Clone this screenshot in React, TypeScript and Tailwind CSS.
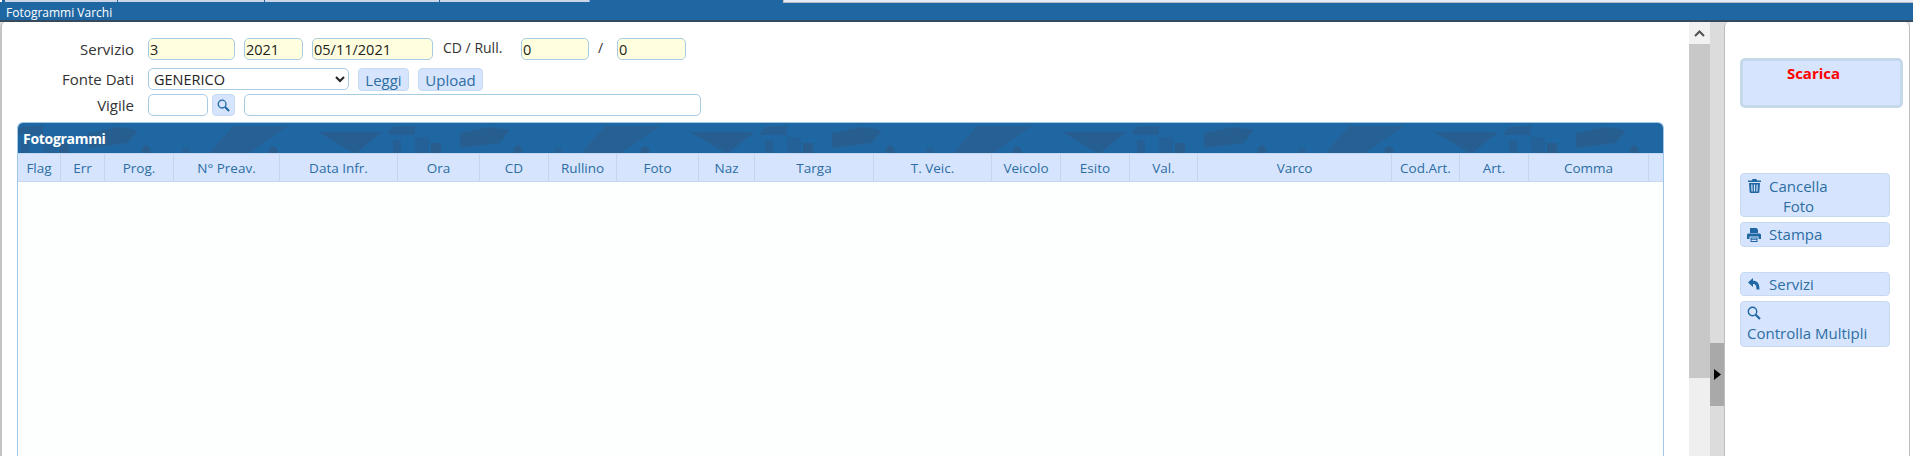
const columns: [string, number][] = [
  ['Flag', 43], ['Err', 44], ['Prog.', 69], ['N° Preav.', 106], ['Data Infr.', 118],
  ['Ora', 82], ['CD', 69], ['Rullino', 68], ['Foto', 82], ['Naz', 56],
  ['Targa', 119], ['T. Veic.', 118], ['Veicolo', 69], ['Esito', 69], ['Val.', 68],
  ['Varco', 194], ['Cod.Art.', 68], ['Art.', 69], ['Comma', 120], ['', 14],
];

const inputCls = 'h-[22px] rounded-[5px] border border-[#a8cbe4] px-px text-[14.5px] leading-[20px] text-[#222] outline-none';
const yellowCls = inputCls + ' bg-[#ffffdf]';
const btnCls = 'rounded-[4px] border border-[#c5daf0] bg-[#d6e5fd] text-[15px] text-[#2d6da3]';

function Label({ children }: { children: string }) {
  return <div className="mr-[14px] w-[117px] shrink-0 text-right text-[15px] leading-[22px] text-[#333]">{children}</div>;
}

function Lens({ size }: { size: number }) {
  return (
    <svg width={size} height={size} viewBox="0 0 14 14" fill="none" stroke="#1f67a3">
      <circle cx="5.5" cy="5.5" r="4.2" strokeWidth="1.4" />
      <path d="M8.7 8.7 L13 13" strokeWidth="2.2" />
    </svg>
  );
}

function TrashIcon() {
  return (
    <svg width="13" height="14" viewBox="0 0 13 14" fill="#1f67a3">
      <path d="M4.5 0h4l.6 1.5H13V3H0V1.5h3.9z" />
      <path d="M1 4h11l-.7 9.2-.8.8h-8l-.8-.8zM3.2 5.5l.3 7h1.2l-.3-7zm2.7 0v7h1.2v-7zm2.7 0-.3 7h1.2l.3-7z" fillRule="evenodd" />
    </svg>
  );
}

function PrintIcon() {
  return (
    <svg width="14" height="14" viewBox="0 0 14 14" fill="#1f67a3">
      <path d="M3 0h6.5L11 1.5V5H3z" />
      <path d="M1 5.5h12l1 1v4.5h-2.5V8.5h-9V11H0V6.5z" />
      <path d="M3.5 9.5h7V14h-7zM4.5 10.5v.8h5v-.8zm0 1.6v.8h5v-.8z" fillRule="evenodd" />
    </svg>
  );
}

function BackIcon() {
  return (
    <svg width="12" height="12" viewBox="0 0 12 12" fill="#1f67a3">
      <path d="M0 4.5 L5 0 V2.8 C9 2.8 11.5 5 11.5 11.5 H8.5 C8.5 7.5 7.5 6 5 6 V9 Z" />
    </svg>
  );
}

function HeaderPattern() {
  return (
    <svg className="absolute inset-0 h-full w-full" aria-hidden="true">
      <defs>
        <pattern id="skyline" width="372" height="31" patternUnits="userSpaceOnUse" x="25" y="0">
          <rect x="0" y="14" width="14" height="17" fill="#285d8e" opacity="0.55" />
          <rect x="16" y="20" width="10" height="11" fill="#285d8e" />
          <path d="M45 10 L75 4 L95 7 L85 20 L45 25 Z" fill="#285d8e" opacity="0.9" />
          <circle cx="103" cy="27" r="4.5" fill="#285d8e" />
          <circle cx="143" cy="28" r="4" fill="#285d8e" opacity="0.6" />
          <path d="M165 31 L190 3 L245 3 L205 31 Z" fill="#285d8e" opacity="0.75" />
          <circle cx="230" cy="28" r="4.5" fill="#285d8e" />
          <path d="M275 9 L340 9 L312 31 Z" fill="#285d8e" opacity="0.85" />
          <path d="M345 12 Q345 3 358 3 L372 3 L372 12 Z" fill="#285d8e" opacity="0.8" />
          <rect x="350" y="17" width="8" height="14" fill="#285d8e" opacity="0.8" />
        </pattern>
      </defs>
      <rect width="100%" height="100%" fill="url(#skyline)" />
    </svg>
  );
}

export default function App() {
  return (
    <div className="flex h-[456px] w-[1913px] flex-col overflow-hidden bg-white font-['Open_Sans',sans-serif]">
      {/* Tab strip */}
      <div className="flex h-[3px] shrink-0 bg-[#1f67a3]">
        <div className="h-[2px] w-[2px] bg-white" />
        <div className="ml-[3px] h-[2px] w-[113px] border-r border-[#1f67a3] bg-[#ccd6e8]" />
        <div className="h-[2px] w-[147px] border-r border-[#1f67a3] bg-[#ccd6e8]" />
        <div className="h-[2px] w-[175px] border-r border-[#1f67a3] bg-[#ccd6e8]" />
        <div className="h-[2px] w-[150px] border-r border-[#7fb0dc] bg-[#ccd6e8]" />
        <div className="ml-[193px] h-[3px] flex-1 border-b border-l border-[#b5bcc4] bg-[#e6ecf5]" />
      </div>

      {/* Title */}
      <div className="h-[19px] shrink-0 border-b-2 border-[#37495c] bg-[#1f67a3] pl-[6px] pt-[2px] text-[12px] leading-[15px] text-white">
        Fotogrammi Varchi
      </div>

      <div className="flex min-h-0 flex-1 bg-[#dcdcdc]">
        {/* Main area */}
        <div className="flex w-[1689px] shrink-0 flex-col rounded-tl-[5px] border-l-2 border-[#c4c4c4] bg-white pl-[15px] pt-[16px]">
          <div className="flex items-start">
            <Label>Servizio</Label>
            <input readOnly value="3" className={'w-[87px] ' + yellowCls} />
            <input readOnly value="2021" className={'ml-[9px] w-[59px] ' + yellowCls} />
            <input readOnly value="05/11/2021" className={'ml-[9px] w-[121px] ' + yellowCls} />
            <div className="ml-[10px] w-[78px] text-[14px] leading-[20px] text-[#333]">CD / Rull.</div>
            <input readOnly value="0" className={'w-[68px] ' + yellowCls} />
            <div className="ml-[9px] w-[19px] text-[14px] leading-[20px] text-[#333]">/</div>
            <input readOnly value="0" className={'w-[69px] ' + yellowCls} />
          </div>

          <div className="mt-[8px] flex items-start">
            <Label>Fonte Dati</Label>
            <select className="h-[22px] w-[201px] rounded-[5px] border border-[#a8cbe4] bg-white pl-[1px] text-[14.5px] text-[#222] outline-none" defaultValue="GENERICO">
              <option>GENERICO</option>
            </select>
            <button className={'ml-[9px] h-[23px] w-[51px] ' + btnCls}>Leggi</button>
            <button className={'ml-[9px] h-[23px] w-[65px] ' + btnCls}>Upload</button>
          </div>

          <div className="mt-[3px] flex items-start">
            <Label>Vigile</Label>
            <input readOnly value="" className={'w-[60px] bg-white ' + inputCls} />
            <button className={'ml-[4px] flex h-[22px] w-[23px] items-center justify-center ' + btnCls}>
              <Lens size={13} />
            </button>
            <input readOnly value="" className={'ml-[9px] w-[457px] bg-white ' + inputCls} />
          </div>

          {/* Grid panel */}
          <div className="mt-[6px] flex w-[1647px] flex-1 flex-col overflow-hidden rounded-t-[6px] border-x border-t border-[#9fc8e8] bg-[#fcfffe]">
            <div className="relative h-[30px] shrink-0 bg-[#1f67a3]">
              <HeaderPattern />
              <div className="relative pl-[5px] text-[14px] font-bold leading-[31px] tracking-[-0.3px] text-white">Fotogrammi</div>
            </div>
            <div className="flex h-[29px] shrink-0 border-y border-[#c4d9ee] bg-[#d6e5fd]">
              {columns.map(([title, width], i) => (
                <div
                  key={i}
                  style={{ width }}
                  className="shrink-0 border-r border-[#c4d6ec] text-center text-[13.5px] leading-[28px] text-[#2d6da3] last:border-r-0"
                >
                  {title}
                </div>
              ))}
            </div>
          </div>
        </div>

        {/* Scrollbar */}
        <div className="flex w-[21px] shrink-0 flex-col bg-[#efefef]">
          <div className="flex h-[22px] items-center justify-center bg-[#f1f1f1]">
            <svg width="11" height="7" viewBox="0 0 11 7"><path d="M1 6 L5.5 1.5 L10 6" fill="none" stroke="#505050" strokeWidth="2" /></svg>
          </div>
          <div className="h-[334px] bg-[#c8c8c8]" />
        </div>

        {/* Splitter */}
        <div className="w-[14px] shrink-0 pt-[321px]">
          <div className="flex h-[63px] items-center justify-center bg-[#a9a9a9]">
            <svg width="7" height="11" viewBox="0 0 7 11"><path d="M0 0 L7 5.5 L0 11 Z" fill="#000" /></svg>
          </div>
        </div>

        {/* Side panel */}
        <div className="w-[186px] shrink-0 rounded-t-[5px] border-x border-[#bdbdbd] bg-white pl-[15px] pt-[36px]">
          <button className="block h-[50px] w-[163px] rounded-[5px] border-[3px] border-[#c5d9ea] bg-[#d6e5fd] pb-[21px] pr-[16px] text-center text-[15px] font-bold leading-[20px] text-[#ff0000]">
            Scarica
          </button>

          <button className={'mt-[65px] block h-[44px] w-[150px] pt-[1px] text-left leading-[20px] ' + btnCls}>
            <div className="flex items-center pl-[7px]">
              <TrashIcon />
              <span className="ml-[8px]">Cancella</span>
            </div>
            <div className="pl-[42px]">Foto</div>
          </button>

          <button className={'mt-[5px] flex h-[25px] w-[150px] items-center pl-[6px] ' + btnCls}>
            <PrintIcon />
            <span className="ml-[8px]">Stampa</span>
          </button>

          <button className={'mt-[25px] flex h-[24px] w-[150px] items-center pl-[7px] ' + btnCls}>
            <BackIcon />
            <span className="ml-[9px]">Servizi</span>
          </button>

          <button className={'mt-[5px] block h-[46px] w-[150px] pl-[6px] text-left ' + btnCls}>
            <Lens size={14} />
            <div className="mt-[3px] leading-[20px]">Controlla Multipli</div>
          </button>
        </div>
        <div className="flex-1 bg-white" />
      </div>
    </div>
  );
}
